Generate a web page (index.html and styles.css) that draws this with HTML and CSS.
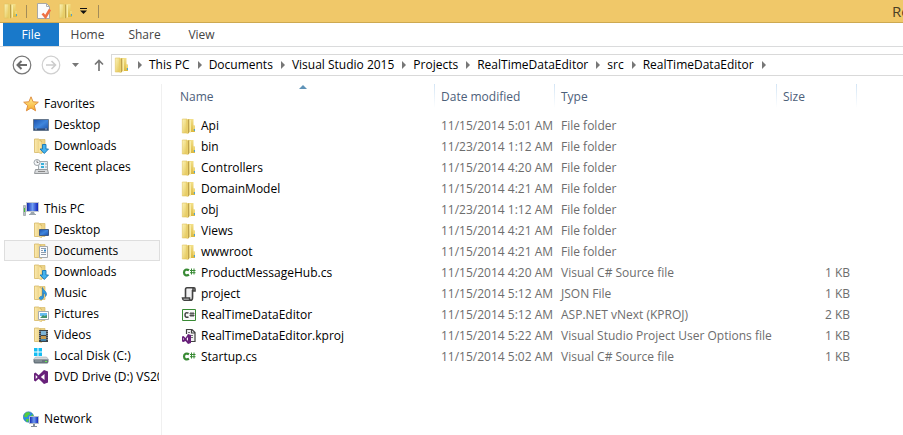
FILE: index.html
```html
<!DOCTYPE html>
<html lang="en">
<head>
<meta charset="utf-8">
<title>RealTimeDataEditor</title>
<link rel="stylesheet" href="styles.css">
</head>
<body>
<svg class="sprite" aria-hidden="true">
  <defs>
    <linearGradient id="g-fold" x1="0" x2="1" y1="0" y2="1"><stop offset="0" stop-color="#fbf3b8"/><stop offset="1" stop-color="#e3c452"/></linearGradient>
    <linearGradient id="g-back" x1="0" x2="0" y1="0" y2="1"><stop offset="0" stop-color="#f3e08a"/><stop offset="1" stop-color="#dcb93f"/></linearGradient>
    <linearGradient id="g-tan" x1="0" x2="1"><stop offset="0" stop-color="#fcebb0"/><stop offset="1" stop-color="#e6c976"/></linearGradient>
    <linearGradient id="g-blue" x1="0" x2="1" y1="0" y2="1"><stop offset="0" stop-color="#1d4fa8"/><stop offset=".5" stop-color="#3f86dd"/><stop offset="1" stop-color="#1b4ea6"/></linearGradient>
    <linearGradient id="g-screen" x1="0" x2="1"><stop offset="0" stop-color="#0c1fa8"/><stop offset=".5" stop-color="#6f9df2"/><stop offset="1" stop-color="#0818b4"/></linearGradient>
    <linearGradient id="g-star" x1="0" x2="0" y1="0" y2="1"><stop offset="0" stop-color="#fff19a"/><stop offset="1" stop-color="#f7a928"/></linearGradient>
  </defs>
  <symbol id="folder" viewBox="0 0 16 16">
    <path d="M7 1h5.500v6.500h1.500V14H7z" fill="url(#g-back)"/>
    <path d="M1.300 1h4.700v14H1.300z" fill="url(#g-fold)" stroke="#e0c560" stroke-width=".6"/>
    <path d="M5.500 1.500L8 1v14l-2 1-.5-1z" fill="#e9d06c"/>
    <path d="M7 1.500h1.300v13L7 15.500z" fill="#bda04b"/>
    <path d="M8.500 2h1.500v12.500H8.500z" fill="#f8eca6"/>
    <path d="M12.500 8h1v3h-1z" fill="#f7e793"/><path d="M13 11h1v2h-1z" fill="#4ea3cf"/>
  </symbol>
  <symbol id="libfolder" viewBox="0 0 16 16">
    <path d="M7 1.500h5v13H7z" fill="#edd387" stroke="#d9bb69" stroke-width=".7"/>
    <path d="M1.500 1h4l3 2v12.500l-3-1h-4z" fill="url(#g-tan)" stroke="#d6b866" stroke-width=".8"/>
    <path d="M6 3l2.500 1v11.500L6 14z" fill="#f8e3a0"/>
  </symbol>
  <symbol id="star" viewBox="0 0 16 16">
    <path d="M8 .8l2.100 5 5.200.4-4 3.400 1.300 5.200L8 12l-4.600 2.800 1.300-5.200-4-3.400 5.200-.4z" fill="url(#g-star)" stroke="#df9042" stroke-width="1"/>
  </symbol>
  <symbol id="desktop" viewBox="0 0 16 16">
    <path d="M.5 2.500h15v11H.5z" fill="url(#g-blue)" stroke="#66788e"/>
    <path d="M1 11.500h14v1.500H1z" fill="#304a75"/><path d="M2 12h2M12 12h2" stroke="#bdcfe4" stroke-width=".7"/>
  </symbol>
  <symbol id="downloads" viewBox="0 0 16 16">
    <use href="#libfolder"/>
    <path d="M9.500 6.500h3.500V11h2.500L11.300 15.500 7 11h2.500z" fill="#45b2ed" stroke="#1676b4" stroke-width=".9"/>
  </symbol>
  <symbol id="recent" viewBox="0 0 16 16">
    <path d="M5.500 2.500h9v9h-9z" fill="#e9f1f6" stroke="#a3aaae"/>
    <path d="M8 4h3v2H8zM8 7h3v2H8z" fill="#3bafd9"/><path d="M12 5h2M12 8h2" stroke="#8d9eaa"/>
    <path d="M2.500 10.500h12l1 4H1.500z" fill="#d6d8da" stroke="#979b9e"/><path d="M5 12.500h7" stroke="#888"/>
    <circle cx="4" cy="3.500" r="3" fill="#f3f6f8" stroke="#a0a7ad"/><path d="M4 1.500v2h1.500" fill="none" stroke="#666" stroke-width=".8"/>
  </symbol>
  <symbol id="pc" viewBox="0 0 16 16">
    <path d="M.5 4.500h2v10h-2z" fill="#b8c0c4" stroke="#8b9499" stroke-width=".6"/><path d="M1 7h1v4H1z" fill="#42c136"/>
    <path d="M3.500 1.500h12v9h-12z" fill="url(#g-screen)" stroke="#c2c8d0"/>
    <path d="M8 11h3l1 2h1v1H6v-1h1z" fill="#9ba5ad"/>
  </symbol>
  <symbol id="desk-folder" viewBox="0 0 16 16">
    <use href="#libfolder"/><path d="M6.500 7.500h9v6h-9z" fill="url(#g-blue)" stroke="#405c86"/>
  </symbol>
  <symbol id="documents" viewBox="0 0 16 16">
    <use href="#libfolder"/><path d="M6.500 3.500h8v11h-8z" fill="#fafbfc" stroke="#a5a9ad"/>
    <path d="M8 5.500h5M8 7.500h2M8 9.500h5M8 11.500h5" stroke="#8d9bab"/><path d="M11 6.500h2v2h-2z" fill="#3186c8"/>
  </symbol>
  <symbol id="music" viewBox="0 0 16 16">
    <use href="#libfolder"/><path d="M9.500 2.500c.5 3 4 3.500 4 6.500 0 1-.5 2-1 2.500.3-2-.7-3-2-3.500V12c0 1.500-1 2.500-2.500 2.500S6 13.500 6.500 12.500s2-1.500 3-1.300z" fill="#2d9be4" stroke="#1870b5" stroke-width=".6"/>
  </symbol>
  <symbol id="pictures" viewBox="0 0 16 16">
    <use href="#libfolder"/><path d="M5.500 5.500h10v8h-10z" fill="#fff" stroke="#a4abb1"/><path d="M7 7h7v3H7z" fill="#66bdf0"/><path d="M7 12l3-3 1.500 1L14 9v3z" fill="#43936a"/>
  </symbol>
  <symbol id="videos" viewBox="0 0 16 16">
    <use href="#libfolder"/><path d="M6 3h9v12H6z" fill="#3c4248"/><path d="M8 4h5v4H8z" fill="#7db4d6"/><path d="M8 9h5v5H8z" fill="#c79b4e"/><path d="M8 12h5v2H8z" fill="#4183ab"/><path d="M6.900 4v10M14.100 4v10" stroke="#d5dade" stroke-width=".8" stroke-dasharray="1 1"/>
  </symbol>
  <symbol id="disk" viewBox="0 0 16 16">
    <path d="M1 0h3.500v3.500H1zM5.500 0H9v3.500H5.500zM1 4.500h3.500V8H1zM5.500 4.500H9V8H5.500z" fill="#15bdf2"/>
    <path d="M2.500 9h11l2 2.500H.5z" fill="#d5d9dc" stroke="#a3aaae" stroke-width=".6"/><path d="M.5 11.500h15V14l-1 1.500h-13l-1-1.500z" fill="#68757d"/><path d="M12 13h2v1h-2z" fill="#66ed4c"/><path d="M2 13h7" stroke="#9ba6ab"/>
  </symbol>
  <symbol id="vs" viewBox="0 0 16 16">
    <path fill-rule="evenodd" d="M11 1l4 1.500v11L11 15 5.700 9.800 2.500 12.500 1 11.500v-7l1.500-1L5.700 6.200zM11.500 5L7.800 8l3.700 3zM2.700 6v4l2-2z" fill="#68217a"/>
  </symbol>
  <symbol id="network" viewBox="0 0 16 16">
    <circle cx="5.500" cy="6" r="5.200" fill="#2a8ee2" stroke="#2870a9" stroke-width=".6"/>
    <path d="M2 2.500C4 .5 7 1 7 2.500S5 4 4.500 5.500 2 6 1 5.500zM3 8h3l-1 3-2-.8zM7.500 5l2.500-2v3z" fill="#55cc3c"/>
    <path d="M6.500 5.500h9v7h-9z" fill="url(#g-screen)" stroke="#b3bcc7"/><path d="M10 13h2v2h2v1H8v-1h2z" fill="#838d98"/>
  </symbol>
  <symbol id="csharp" viewBox="0 0 16 16">
    <path d="M8 5.300C5.500 3.700 3 5 3 7.500s2.500 3.800 5 2.300" fill="none" stroke="#388a34" stroke-width="2.200"/>
    <path d="M10.500 3.500v6M13 3.500v6M9 5.500h5.500M9 7.700h5.500" fill="none" stroke="#388a34"/>
  </symbol>
  <symbol id="script" viewBox="0 0 16 16">
    <path d="M5 2h8v9h-2v3H4V4z" fill="#f1f1f2"/>
    <path d="M12 5V3q0-1.300 1-1.300T14 3v2h-2M13 1.700H6Q4.500 1.700 4.500 3.500V12M11.500 4v8q0 2.300-2 2.300H3Q1.800 14.300 1.500 12h7q0 2 1.200 2" fill="none" stroke="#424242" stroke-width="1.600"/>
  </symbol>
  <symbol id="csproj" viewBox="0 0 16 16">
    <path d="M1.500 2.500h13v11h-13z" fill="#f8f8f8" stroke="#388a34"/>
    <path d="M7.500 6.200C5.500 5 4 6 4 8s1.500 3 3.500 1.800" fill="none" stroke="#424242" stroke-width="1.500"/><path d="M10 5v5M12 5v5M8.500 6.700h5M8.500 8.500h5" stroke="#424242" stroke-width=".9"/>
  </symbol>
  <symbol id="kproj" viewBox="0 0 16 16">
    <path d="M5 1h7l3 3v10H8" fill="#f2f2f3"/>
    <path d="M5.500 6V1.500H11l3 3v9h-4M10.500 1.500v3.500H14" fill="none" stroke="#424242" stroke-width="1.200"/>
    <path d="M7 4.500h2M9.500 7.500H12M9.500 9.500H12" stroke="#737373"/>
    <path fill-rule="evenodd" d="M7 6l3 1v8l-3 1-2.500-3L2.500 14 1 13.500v-5L2.500 8l2 2zM7 9l-1.500 2L7 13zM2.200 10v2l1-1z" fill="#68217a"/>
  </symbol>
  <symbol id="check" viewBox="0 0 16 18">
    <path d="M1.500 1.500h9l3 3v12h-12z" fill="#fbfbfb" stroke="#a8a8a4"/><path d="M10.500 1.500v3h3" fill="none" stroke="#aaa"/>
    <path d="M6.500 11.500l3 3.500L14 7.500" fill="none" stroke="#ef7143" stroke-width="2.600"/>
  </symbol>
</svg>

<header class="titlebar">
  <svg class="icon"><use href="#folder"/></svg>
  <span class="divider"></span>
  <button class="quick" type="button" aria-label="Properties"><svg class="icon icon-tall"><use href="#check"/></svg></button>
  <button class="quick" type="button" aria-label="New folder"><svg class="icon"><use href="#folder"/></svg></button>
  <button class="quick more" type="button" aria-label="Customize toolbar"><svg viewBox="0 0 8 6"><path d="M0 .5h7" stroke="#111"/><path d="M0 2.500h7L3.500 6z" fill="#111"/></svg></button>
  <span class="divider"></span>
  <h1 class="caption">RealTimeDataEditor</h1>
</header>

<div class="ribbon">
  <button class="tab tab-file" type="button">File</button>
  <button class="tab" type="button">Home</button>
  <button class="tab" type="button">Share</button>
  <button class="tab" type="button">View</button>
</div>

<div class="addressbar">
  <button class="nav-btn" type="button" aria-label="Back"><svg viewBox="0 0 20 20"><circle cx="10" cy="10" r="8.800" fill="none" stroke="#777" stroke-width="1.200"/><path d="M15 10H6M9.500 6L5.500 10l4 4" fill="none" stroke="#6c6c6c" stroke-width="2"/></svg></button>
  <button class="nav-btn" type="button" aria-label="Forward"><svg viewBox="0 0 20 20"><circle cx="10" cy="10" r="8.800" fill="none" stroke="#d0d0d0" stroke-width="1.200"/><path d="M5 10h9M10.500 6l4 4-4 4" fill="none" stroke="#ccc" stroke-width="1.600"/></svg></button>
  <button class="nav-btn small" type="button" aria-label="Recent locations"><svg viewBox="0 0 8 4"><path d="M0 0h7L3.500 4z" fill="#777"/></svg></button>
  <button class="nav-btn up" type="button" aria-label="Up"><svg viewBox="0 0 10 12"><path d="M5 12V2M1 5.500L5 1.500l4 4" fill="none" stroke="#777" stroke-width="1.700"/></svg></button>
  <nav class="crumbs" aria-label="Path">
    <svg class="icon"><use href="#folder"/></svg>
    <i class="arrow"></i><a href="#">This PC</a>
    <i class="arrow"></i><a href="#">Documents</a>
    <i class="arrow"></i><a href="#">Visual Studio 2015</a>
    <i class="arrow"></i><a href="#">Projects</a>
    <i class="arrow"></i><a href="#">RealTimeDataEditor</a>
    <i class="arrow"></i><a href="#">src</a>
    <i class="arrow"></i><a href="#">RealTimeDataEditor</a>
    <i class="arrow"></i>
  </nav>
</div>

<div class="workspace">
  <nav class="tree" aria-label="Folders">
    <div class="group">
      <a class="root" href="#"><svg class="icon"><use href="#star"/></svg>Favorites</a>
      <a href="#"><svg class="icon"><use href="#desktop"/></svg>Desktop</a>
      <a href="#"><svg class="icon"><use href="#downloads"/></svg>Downloads</a>
      <a href="#"><svg class="icon"><use href="#recent"/></svg>Recent places</a>
    </div>
    <div class="group">
      <a class="root" href="#"><svg class="icon"><use href="#pc"/></svg>This PC</a>
      <a href="#"><svg class="icon"><use href="#desk-folder"/></svg>Desktop</a>
      <a class="selected" href="#"><svg class="icon"><use href="#documents"/></svg>Documents</a>
      <a href="#"><svg class="icon"><use href="#downloads"/></svg>Downloads</a>
      <a href="#"><svg class="icon"><use href="#music"/></svg>Music</a>
      <a href="#"><svg class="icon"><use href="#pictures"/></svg>Pictures</a>
      <a href="#"><svg class="icon"><use href="#videos"/></svg>Videos</a>
      <a href="#"><svg class="icon"><use href="#disk"/></svg>Local Disk (C:)</a>
      <a href="#"><svg class="icon"><use href="#vs"/></svg>DVD Drive (D:) VS2015</a>
    </div>
    <div class="group">
      <a class="root" href="#"><svg class="icon"><use href="#network"/></svg>Network</a>
    </div>
  </nav>

  <main class="files">
    <table>
      <colgroup><col class="c-name"><col class="c-date"><col class="c-type"><col class="c-size"><col></colgroup>
      <thead>
        <tr><th class="sorted">Name<svg class="sort" viewBox="0 0 8 4"><path d="M0 4l4-4 4 4z" fill="#5f93b8"/></svg></th><th>Date modified</th><th>Type</th><th>Size</th><td></td></tr>
      </thead>
      <tbody>
        <tr><td><svg class="icon"><use href="#folder"/></svg>Api</td><td>11/15/2014 5:01 AM</td><td>File folder</td><td></td><td></td></tr>
        <tr><td><svg class="icon"><use href="#folder"/></svg>bin</td><td>11/23/2014 1:12 AM</td><td>File folder</td><td></td><td></td></tr>
        <tr><td><svg class="icon"><use href="#folder"/></svg>Controllers</td><td>11/15/2014 4:20 AM</td><td>File folder</td><td></td><td></td></tr>
        <tr><td><svg class="icon"><use href="#folder"/></svg>DomainModel</td><td>11/15/2014 4:21 AM</td><td>File folder</td><td></td><td></td></tr>
        <tr><td><svg class="icon"><use href="#folder"/></svg>obj</td><td>11/23/2014 1:12 AM</td><td>File folder</td><td></td><td></td></tr>
        <tr><td><svg class="icon"><use href="#folder"/></svg>Views</td><td>11/15/2014 4:21 AM</td><td>File folder</td><td></td><td></td></tr>
        <tr><td><svg class="icon"><use href="#folder"/></svg>wwwroot</td><td>11/15/2014 4:21 AM</td><td>File folder</td><td></td><td></td></tr>
        <tr><td><svg class="icon"><use href="#csharp"/></svg>ProductMessageHub.cs</td><td>11/15/2014 4:20 AM</td><td>Visual C# Source file</td><td>1 KB</td><td></td></tr>
        <tr><td><svg class="icon"><use href="#script"/></svg>project</td><td>11/15/2014 5:12 AM</td><td>JSON File</td><td>1 KB</td><td></td></tr>
        <tr><td><svg class="icon"><use href="#csproj"/></svg>RealTimeDataEditor</td><td>11/15/2014 5:12 AM</td><td>ASP.NET vNext (KPROJ)</td><td>2 KB</td><td></td></tr>
        <tr><td><svg class="icon"><use href="#kproj"/></svg>RealTimeDataEditor.kproj</td><td>11/15/2014 5:22 AM</td><td>Visual Studio Project User Options file</td><td>1 KB</td><td></td></tr>
        <tr><td><svg class="icon"><use href="#csharp"/></svg>Startup.cs</td><td>11/15/2014 5:02 AM</td><td>Visual C# Source file</td><td>1 KB</td><td></td></tr>
      </tbody>
    </table>
  </main>
</div>
</body>
</html>
```
FILE: styles.css
```css
* { box-sizing: border-box; }

body {
  display: flex;
  flex-direction: column;
  min-height: 100vh;
  margin: 0;
  overflow: hidden;
  background: #fff;
  color: #000;
  font: 12px/20px "Open Sans", "Noto Sans", sans-serif;
}

a { color: inherit; text-decoration: none; }

button {
  padding: 0;
  border: 0;
  background: none;
  font: inherit;
  color: inherit;
}

.sprite { position: absolute; width: 0; height: 0; }
.icon { flex: none; width: 16px; height: 16px; }
.icon-tall { height: 18px; }

.titlebar {
  display: flex;
  align-items: center;
  height: 23px;
  padding-left: 3px;
  overflow: hidden;
  border-bottom: 1px solid #cda951;
  background: #f0c869;
}
.divider { flex: none; width: 1px; height: 13px; margin: 0 9px 0 7px; background: #a38c58; }
.quick { display: flex; margin-right: 6px; }
.quick.more { margin: 0 3px 0 0; }
.more svg { width: 8px; height: 6px; }
.caption {
  flex: none;
  margin: 0 0 0 auto;
  width: 11px;
  color: #4a3f25;
  font-size: 15px;
  font-weight: 400;
  white-space: nowrap;
}

.ribbon {
  display: flex;
  height: 24px;
  padding-left: 3px;
  border-bottom: 1px solid #dadbdc;
}
.tab { width: 57px; line-height: 24px; color: #444; }
.tab-file { width: 56px; background: #1979ca; color: #fff; }

.addressbar {
  display: flex;
  align-items: center;
  padding: 7px 0 8px 12px;
}
.nav-btn { display: flex; margin-right: 9px; }
.nav-btn svg { width: 20px; height: 20px; }
.nav-btn.small svg { width: 8px; height: 4px; }
.nav-btn.small { margin: 0 14px 0 2px; }
.nav-btn.up svg { width: 10px; height: 12px; }
.nav-btn.up { margin-right: 7px; }

.crumbs {
  display: flex;
  flex: 1;
  align-items: center;
  height: 22px;
  padding-left: 2px;
  border: 1px solid #d9d9d9;
  border-right: 0;
  white-space: nowrap;
}
.arrow {
  margin: 0 7px 0 8px;
  border: 4px solid transparent;
  border-right: 0;
  border-left-color: #777;
}

.workspace { display: flex; flex: 1; }

.tree {
  display: flex;
  flex: none;
  flex-direction: column;
  gap: 21px;
  width: 162px;
  padding: 9px 1px 4px 4px;
  border-right: 1px solid #f0f0f0;
}
.group a {
  display: flex;
  align-items: center;
  gap: 5px;
  height: 21px;
  padding-left: 28px;
  border: 1px solid transparent;
  overflow: hidden;
  white-space: nowrap;
}
.group .root { padding-left: 18px; }
.group .selected { border-color: #dedede; background: #f7f7f7; }

.files { flex: 1; min-width: 0; }

table { width: 100%; table-layout: fixed; border-collapse: collapse; }
.c-name { width: 273px; }
.c-date { width: 120px; }
.c-type { width: 222px; }
.c-size { width: 80px; }

th {
  position: relative;
  padding: 0 6px 5px;
  background: linear-gradient(#d3e5f5, #fff) right top / 1px 24px no-repeat;
  color: #4c607a;
  font-weight: 400;
  line-height: 26px;
  text-align: left;
}
th:first-child { padding-left: 18px; }
.sort { position: absolute; top: 1px; left: 50%; width: 8px; height: 4px; }

tbody td {
  height: 21px;
  padding: 0 6px;
  color: #6d6d6d;
  white-space: nowrap;
}
tbody td:first-child {
  display: flex;
  align-items: center;
  gap: 4px;
  padding-left: 19px;
  color: #000;
}
tbody td:nth-child(4) { text-align: right; padding-right: 7px; }
```
